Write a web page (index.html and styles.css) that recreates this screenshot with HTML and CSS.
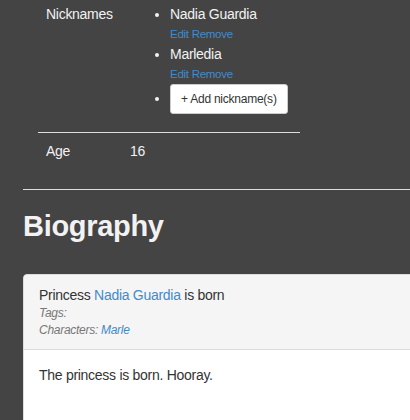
FILE: index.html
```html
<!DOCTYPE html>
<html lang="en">
<head>
<meta charset="utf-8">
<title>Character</title>
<link rel="stylesheet" href="styles.css">
</head>
<body>
<div class="page">
  <table class="attrs">
    <colgroup><col class="col-label"><col></colgroup>
    <tr>
      <th>Nicknames</th>
      <td>
        <ul class="nicks">
          <li>Nadia Guardia
            <div class="actions"><a href="#">Edit</a> <a href="#">Remove</a></div>
          </li>
          <li>Marledia
            <div class="actions"><a href="#">Edit</a> <a href="#">Remove</a></div>
          </li>
          <li><button class="btn" type="button">+ Add nickname(s)</button></li>
        </ul>
      </td>
    </tr>
    <tr class="row-sep">
      <th>Age</th>
      <td>16</td>
    </tr>
  </table>
  <hr class="rule">
  <h2 class="title">Biography</h2>
  <div class="panel">
    <div class="panel-heading">
      <div class="event">Princess <a href="#">Nadia Guardia</a> is born</div>
      <div class="meta">Tags:</div>
      <div class="meta">Characters: <a href="#">Marle</a></div>
    </div>
    <div class="panel-body">
      <p>The princess is born. Hooray.</p>
    </div>
  </div>
</div>
</body>
</html>
```

FILE: styles.css
```css
html, body {
  margin: 0;
  padding: 0;
  overflow: hidden;
  background: #444444;
}
body {
  font-family: "Liberation Sans", Arial, sans-serif;
  font-size: 14px;
  line-height: 20px;
  color: #f2f2f2;
  letter-spacing: -0.02em;
}
a {
  color: #428bca;
  text-decoration: none;
}
.page {
  margin-top: -4px;
  padding-left: 23px;
  width: 600px;
}
.attrs {
  margin: 0 0 20px 15px;
  width: 262px;
  table-layout: fixed;
  border-collapse: separate;
  border-spacing: 0;
}
.col-label {
  width: 84px;
}
.attrs th,
.attrs td {
  padding: 8px;
  text-align: left;
  font-weight: normal;
  vertical-align: top;
  white-space: nowrap;
}
.row-sep th,
.row-sep td {
  border-top: 1px solid #dddddd;
}
.nicks {
  margin: 0 0 10px;
  padding-left: 40px;
}
.actions {
  font-size: 11.5px;
  line-height: 20px;
}
.btn {
  font-family: inherit;
  font-size: 12px;
  line-height: 18px;
  letter-spacing: -0.02em;
  padding: 5px 10px;
  color: #333333;
  background: #ffffff;
  border: 1px solid #cccccc;
  border-radius: 3px;
  vertical-align: middle;
}
.rule {
  margin: 20px 0;
  border: 0;
  border-top: 1px solid #dddddd;
  height: 0;
}
.title {
  margin: 19px 0 32px;
  font-size: 29px;
  line-height: 32px;
  font-weight: bold;
  letter-spacing: -0.3px;
  color: #f2f2f2;
}
.panel {
  background: #ffffff;
  border: 1px solid #dddddd;
  border-radius: 4px;
  color: #333333;
  min-height: 200px;
}
.panel-heading {
  background: #f5f5f5;
  border-bottom: 1px solid #dddddd;
  border-radius: 3px 3px 0 0;
  padding: 10px 15px;
}
.event {
  font-size: 14px;
  line-height: 20px;
}
.meta {
  font-size: 12px;
  line-height: 17px;
  font-style: italic;
  color: #777777;
}
.panel-body {
  padding: 15px;
}
.panel-body p {
  margin: 0;
}
```
